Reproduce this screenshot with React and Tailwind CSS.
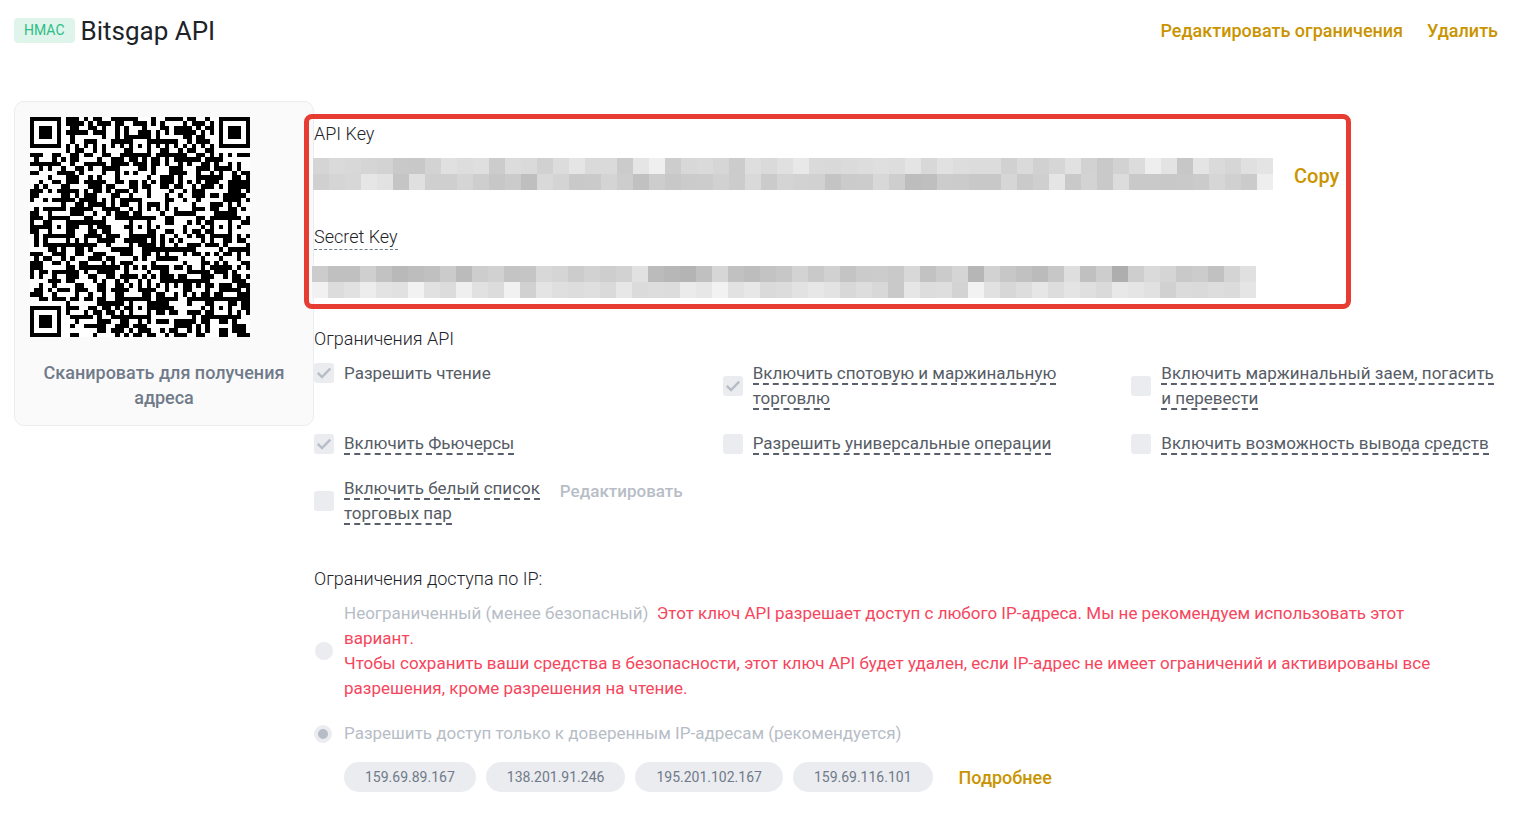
import React from "react";

const KEY_ROWS = [
  "d5 da d8 d5 d3 c9 c8 d3 e0 dd df cc dc da d1 dc e5 da da cb e5 ef cd d8 da d6 cc de da e0 e8 da d9 db dd df dd e4 d8 e1 dd dc dc d1 da d1 d6 e1 d2 c9 d2 dc ee e3 c7 e4 da d6 e0 e4",
  "d0 d5 d7 e6 e2 c5 e0 cf cf d5 ce c7 cb bf d9 d4 c9 ca d4 cd c1 cd c8 cb cc d1 cc d9 cb d4 d2 d1 c4 cb cc d8 ce bd bf cc cb c8 c8 d6 ca cf e5 c9 d3 c9 dc c9 c9 c8 c9 cb d6 d0 cb ee",
];
const SECRET_ROWS = [
  "cc c0 c0 cf c2 b9 bd c0 cb bb cd d1 c4 c5 d8 d5 cc d2 ce d2 e1 bb b7 b4 c0 d6 c1 bd c3 c7 d3 c9 d1 c4 cb cc c9 d8 c2 cb d5 b6 d2 c7 c1 bb c7 de c0 cd ae ce da d5 c9 cc c1 d4 e0",
  "f1 dc e1 ed e3 e1 f2 e1 dc ef e1 dc f1 d1 e4 df dd df da e7 db dd dc eb e7 f2 e2 e7 da dc e2 e7 e3 d8 dd d8 c9 e6 dd de d3 f2 e1 d7 dd e6 dd e4 df da e8 e5 e1 d1 db da dd db e5",
];

function Mosaic({ rows, label }) {
  const cells = rows.map((r) => r.split(" "));
  return (
    <svg
      role="img"
      aria-label={label}
      width={cells[0].length * 16}
      height={32}
      shapeRendering="crispEdges"
      className="block shrink-0"
    >
      {cells.map((row, y) =>
        row.map((c, x) => (
          <rect key={`${x}-${y}`} x={x * 16} y={y * 16} width="16" height="16" fill={`#${c}${c}${c}`} />
        ))
      )}
    </svg>
  );
}

const SIZE = 49;

// Placeholder data modules with the standard finder, timing and alignment marks; it does not encode an address.
function buildQr() {
  const grid = [];
  let seed = 20231;
  for (let y = 0; y < SIZE; y++) {
    const row = [];
    for (let x = 0; x < SIZE; x++) {
      seed = (seed * 1103515245 + 12345) % 2147483648;
      row.push(seed / 2147483648 < 0.52);
    }
    grid.push(row);
  }
  for (let i = 0; i < SIZE; i++) {
    grid[6][i] = i % 2 === 0;
    grid[i][6] = i % 2 === 0;
  }
  const marker = (cx, cy, reach, dark) => {
    for (let dy = -reach; dy <= reach; dy++) {
      for (let dx = -reach; dx <= reach; dx++) {
        const x = cx + dx;
        const y = cy + dy;
        if (x < 0 || y < 0 || x >= SIZE || y >= SIZE) continue;
        grid[y][x] = dark(Math.max(Math.abs(dx), Math.abs(dy)));
      }
    }
  };
  [[6, 24], [24, 6], [24, 24], [24, 42], [42, 24], [42, 42]].forEach(([x, y]) =>
    marker(x, y, 2, (d) => d !== 1)
  );
  [[3, 3], [45, 3], [3, 45]].forEach(([x, y]) => marker(x, y, 4, (d) => d < 2 || d === 3));
  return grid;
}

const QR_PATH = buildQr()
  .map((row, y) => row.map((on, x) => (on ? `M${x} ${y}h1v1h-1z` : "")).join(""))
  .join("");

function Tick() {
  return (
    <svg viewBox="0 0 20 20" className="pointer-events-none absolute inset-0 size-5" fill="none" stroke="#b7bdc6" strokeWidth="2.4">
      <path d="M3.8 9.8l4.2 4.2L16.2 5.6" />
    </svg>
  );
}

function Permission({ id, label, checked = false, plain = false, children }) {
  return (
    <div className={plain ? "flex items-start" : "flex items-center"}>
      <span className={plain ? "relative mt-0.5 size-5 shrink-0" : "relative size-5 shrink-0"}>
        <input
          id={id}
          type="checkbox"
          disabled
          defaultChecked={checked}
          className="block size-5 appearance-none rounded-[3px] bg-[#eaecef]"
        />
        {checked && <Tick />}
      </span>
      <label htmlFor={id} className="ml-2.5 text-[17px] text-[#565c66]">
        {plain ? label : <span className="border-b-2 border-dashed border-[#5a606b]">{label}</span>}
      </label>
      {children}
    </div>
  );
}

const IPS = ["159.69.89.167", "138.201.91.246", "195.201.102.167", "159.69.116.101"];

export default function App() {
  return (
    <div className="min-h-screen bg-white font-['Roboto','Noto_Sans',sans-serif] text-[18px] leading-[25px] text-[#1e2329]">
      <header className="flex items-center justify-between pt-3 pr-[18px] pl-3.5">
        <div className="flex items-center gap-1.5">
          <span className="rounded-sm bg-[#dff5ec] px-2.5 text-[14px] text-[#2ebd85]">HMAC</span>
          <h1 className="pt-0.5 text-[26px] leading-[34px]">Bitsgap API</h1>
        </div>
        <nav className="flex gap-6 font-medium text-[#c99400]">
          <a href="#edit">Редактировать ограничения</a>
          <a href="#delete">Удалить</a>
        </nav>
      </header>

      <main className="flex items-start pt-[53px] pr-2.5 pl-3.5">
        <aside className="w-[300px] shrink-0 rounded-[10px] border border-[#eaecef] bg-[#fafafa] p-[15px]">
          <svg viewBox="0 0 49 49" role="img" aria-label="QR" shapeRendering="crispEdges" className="block size-[220px] bg-white">
            <path d={QR_PATH} fill="#000" />
          </svg>
          <p className="mt-[23px] text-center font-medium text-[#707a8a]">Сканировать для получения адреса</p>
        </aside>

        <div className="min-w-0 flex-1 pt-5">
          <section className="relative">
            <div className="pointer-events-none absolute -top-[7px] -left-2.5 h-[195px] w-[1047px] rounded-lg border-[5px] border-[#e63c32]" />
            <h2 className="font-light">API Key</h2>
            <div className="mt-3 -ml-px flex items-center gap-[21px]">
              <Mosaic rows={KEY_ROWS} label="API Key" />
              <button type="button" className="pt-1 text-[20px] font-medium text-[#c99400]">Copy</button>
            </div>
            <h2 className="mt-[34px] inline-block border-b border-dashed border-[#707a8a] font-light">Secret Key</h2>
            <div className="mt-4 -ml-0.5">
              <Mosaic rows={SECRET_ROWS} label="Secret Key" />
            </div>
          </section>

          <section className="mt-7">
            <h2 className="font-light">Ограничения API</h2>
            <div className="mt-2.5 grid grid-cols-3 gap-x-[34px] gap-y-5">
              <Permission id="read" label="Разрешить чтение" checked plain />
              <Permission id="spot" label="Включить спотовую и маржинальную торговлю" checked />
              <Permission id="loan" label="Включить маржинальный заем, погасить и перевести" />
              <Permission id="futures" label="Включить Фьючерсы" checked />
              <Permission id="universal" label="Разрешить универсальные операции" />
              <Permission id="withdraw" label="Включить возможность вывода средств" />
              <Permission id="whitelist" label="Включить белый список торговых пар">
                <button type="button" disabled className="mr-1.5 mb-5 ml-3 shrink-0 text-[17px] font-medium text-[#b7bdc6]">
                  Редактировать
                </button>
              </Permission>
            </div>
          </section>

          <fieldset className="mt-10">
            <legend className="font-light">Ограничения доступа по IP:</legend>
            <div className="mt-2.5 flex items-center pr-10">
              <input
                id="ip-any"
                type="radio"
                name="ip"
                disabled
                className="size-5 shrink-0 appearance-none rounded-full border border-white bg-[#eaecef]"
              />
              <label htmlFor="ip-any" className="ml-2.5 text-[17px]">
                <span className="text-[#b7bdc6]">Неограниченный (менее безопасный)</span>
                &nbsp;{" "}
                <span className="text-[#f6465d]">
                  Этот ключ API разрешает доступ с любого IP-адреса. Мы не рекомендуем использовать этот
                  <br />
                  вариант.
                </span>
                <br />
                <span className="text-[#f6465d]">
                  Чтобы сохранить ваши средства в безопасности, этот ключ API будет удален, если IP-адрес не имеет
                  ограничений и активированы все
                  <br />
                  разрешения, кроме разрешения на чтение.
                </span>
              </label>
            </div>
            <div className="mt-5 flex items-center">
              <input
                id="ip-trusted"
                type="radio"
                name="ip"
                disabled
                defaultChecked
                className="size-[18px] shrink-0 appearance-none rounded-full border-4 border-[#eaecef] bg-[#b7bdc6]"
              />
              <label htmlFor="ip-trusted" className="ml-3 text-[17px] text-[#b7bdc6]">
                Разрешить доступ только к доверенным IP-адресам (рекомендуется)
              </label>
            </div>
            <div className="mt-4 ml-[30px] flex items-center gap-2.5">
              {IPS.map((ip) => (
                <span key={ip} className="rounded-full bg-[#eaecef] px-[21px] text-[14px] leading-[30px] text-[#707a8a]">
                  {ip}
                </span>
              ))}
              <a href="#more" className="ml-4 font-medium text-[#c99400]">Подробнее</a>
            </div>
          </fieldset>
        </div>
      </main>
    </div>
  );
}
